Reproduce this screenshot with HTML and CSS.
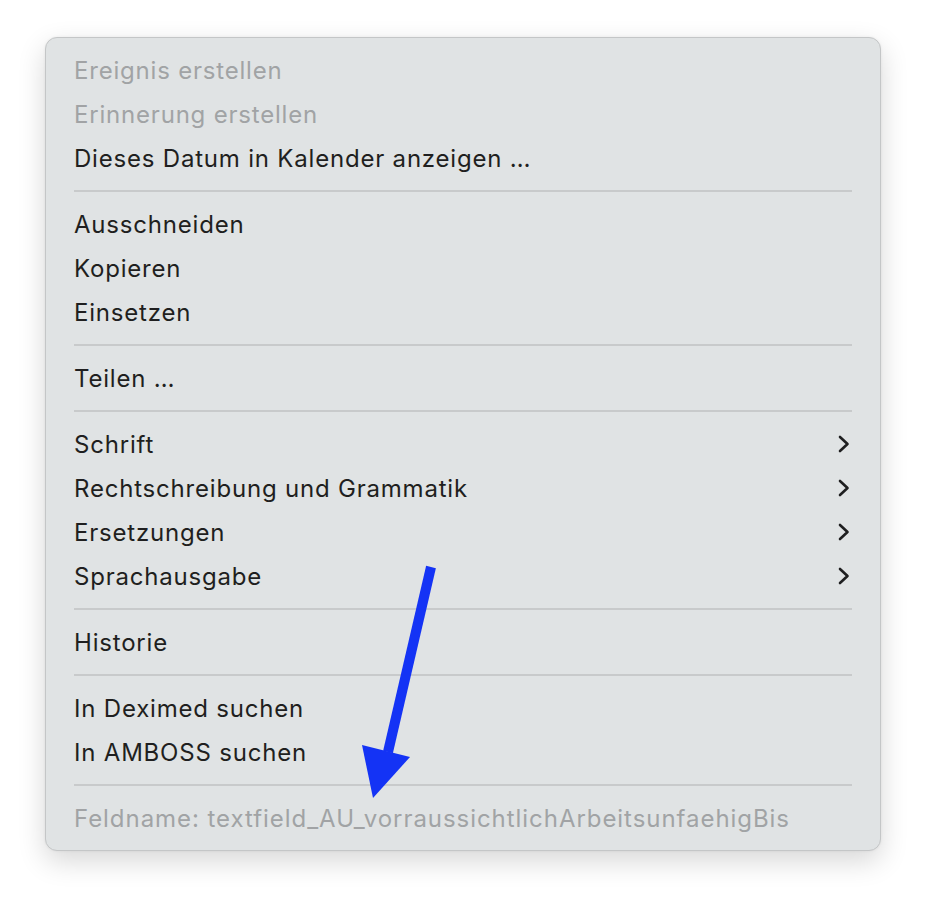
FILE: index.html
```html
<!DOCTYPE html>
<html lang="de">
<head>
<meta charset="utf-8">
<link rel="stylesheet" href="styles.css">
</head>
<body>
<div class="menu">
  <div class="item disabled">Ereignis erstellen</div>
  <div class="item disabled">Erinnerung erstellen</div>
  <div class="item">Dieses Datum in Kalender anzeigen …</div>
  <div class="sep"></div>
  <div class="item">Ausschneiden</div>
  <div class="item">Kopieren</div>
  <div class="item">Einsetzen</div>
  <div class="sep"></div>
  <div class="item">Teilen …</div>
  <div class="sep"></div>
  <div class="item sub">Schrift<svg class="chev" viewBox="0 0 12 18"><path d="M2 2 L9.5 9 L2 16"/></svg></div>
  <div class="item sub">Rechtschreibung und Grammatik<svg class="chev" viewBox="0 0 12 18"><path d="M2 2 L9.5 9 L2 16"/></svg></div>
  <div class="item sub">Ersetzungen<svg class="chev" viewBox="0 0 12 18"><path d="M2 2 L9.5 9 L2 16"/></svg></div>
  <div class="item sub">Sprachausgabe<svg class="chev" viewBox="0 0 12 18"><path d="M2 2 L9.5 9 L2 16"/></svg></div>
  <div class="sep"></div>
  <div class="item">Historie</div>
  <div class="sep"></div>
  <div class="item">In Deximed suchen</div>
  <div class="item">In AMBOSS suchen</div>
  <div class="sep"></div>
  <div class="item disabled field">Feldname: textfield_AU_vorraussichtlichArbeitsunfaehigBis</div>
</div>
<svg class="arrow" width="926" height="904" viewBox="0 0 926 904">
  <line x1="431" y1="567" x2="388" y2="752" stroke="#1433f5" stroke-width="10"/>
  <polygon points="362,745 410,757 373,798" fill="#1433f5"/>
</svg>
</body>
</html>
```
FILE: styles.css
```css
html, body {
  margin: 0;
  padding: 0;
  background: #ffffff;
}
body {
  width: 926px;
  height: 904px;
  position: relative;
  overflow: hidden;
  font-family: "Inter", "Liberation Sans", sans-serif;
}
.menu {
  box-sizing: border-box;
  margin: 37px 0 0 45px;
  width: 836px;
  height: 814px;
  background: #e0e3e4;
  border: 1px solid #c4c6c7;
  border-radius: 12px;
  box-shadow: 0 10px 28px rgba(0, 0, 0, 0.16), 0 0 3px rgba(0,0,0,0.06);
  padding: 10px 28px 0 28px;
}
.item {
  height: 44px;
  display: flex;
  align-items: center;
  justify-content: space-between;
  font-size: 24px;
  color: #1f1f20;
  letter-spacing: 0.8px;
  white-space: nowrap;
}
.item.disabled {
  color: #a1a3a5;
}
.item.field {
  letter-spacing: 0.95px;
}
.sep {
  height: 22px;
  display: flex;
  align-items: center;
}
.sep::before {
  content: "";
  display: block;
  width: 100%;
  height: 2px;
  background: #c8cacb;
}
.chev {
  width: 12px;
  height: 18px;
  margin-right: 2px;
}
.chev path {
  fill: none;
  stroke: #1f1f20;
  stroke-width: 2.6;
  stroke-linecap: round;
  stroke-linejoin: round;
}
.arrow {
  position: absolute;
  left: 0;
  top: 0;
}
```
